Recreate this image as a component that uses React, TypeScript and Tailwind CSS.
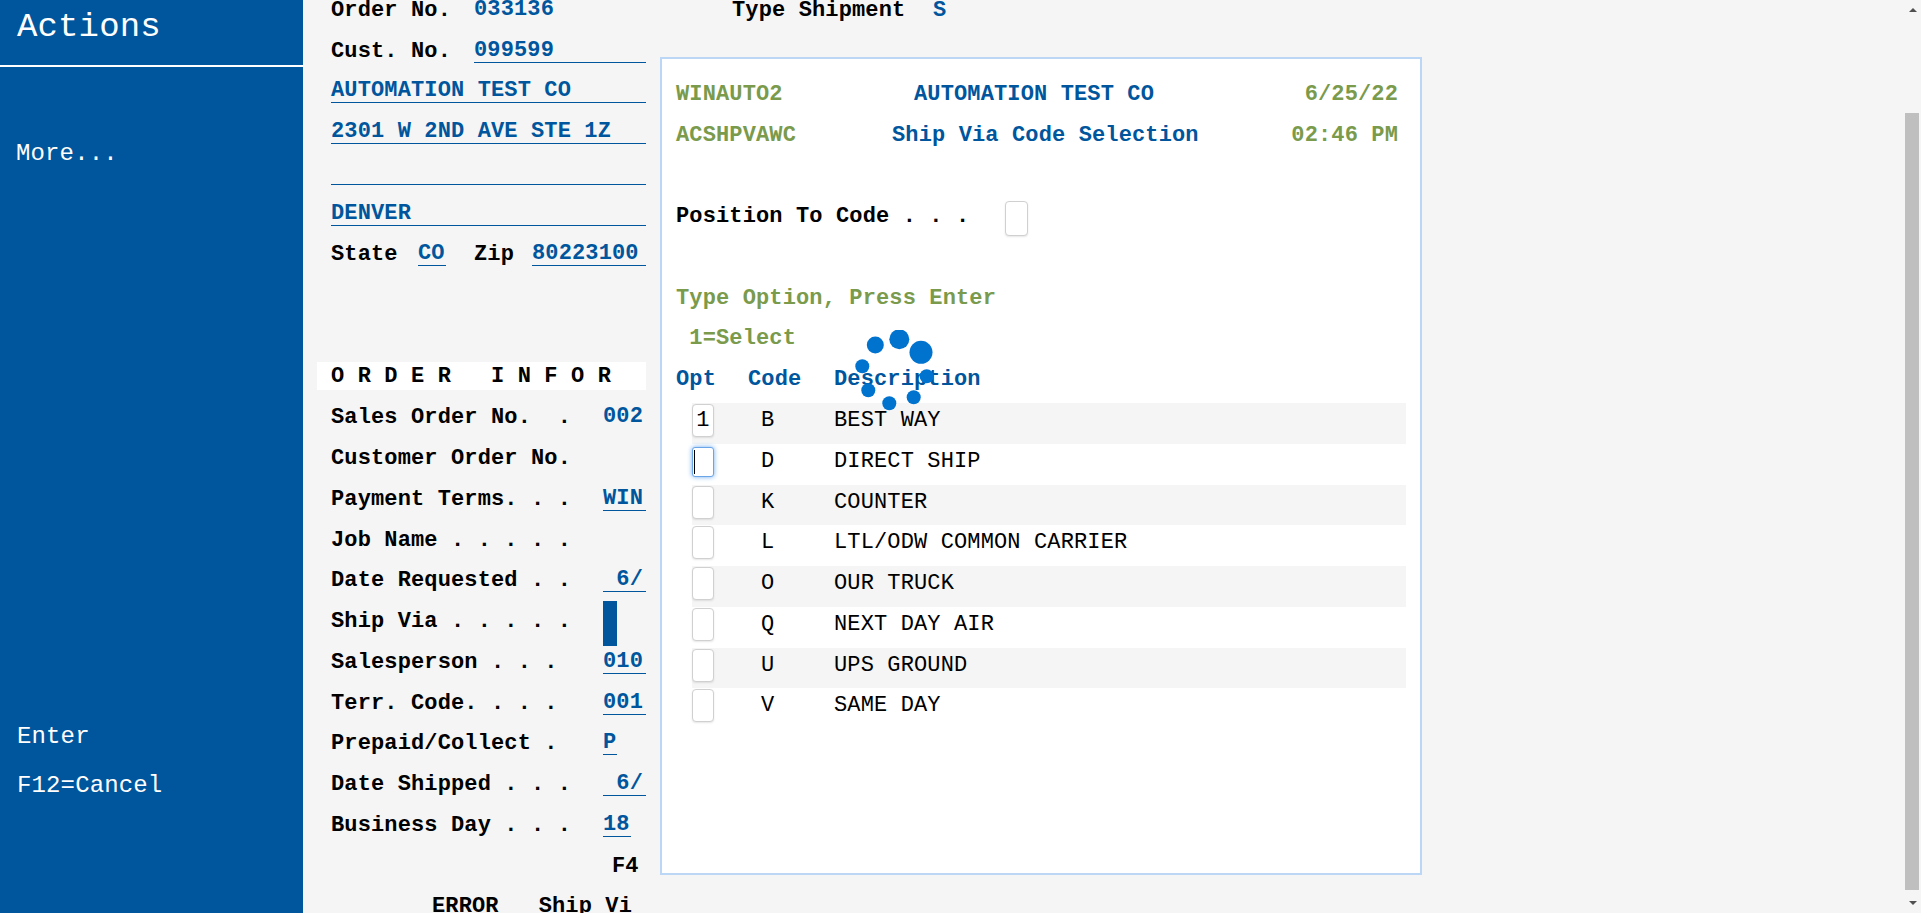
const blue = 'text-[#00569d]';
const green = 'text-[#7a9a4c]';

function Row({ children }: { children?: React.ReactNode }) {
  return <div className="flex h-[40.75px] shrink-0 items-end whitespace-pre leading-[23px]">{children}</div>;
}

function Field({ w, line = true, children }: { w: string; line?: boolean; children?: React.ReactNode }) {
  return (
    <span className={`${w} block h-[24px] ${blue} ${line ? 'border-b border-[#00569d]' : ''}`}>
      {children}
    </span>
  );
}

const infoRows: [string, string, boolean, string][] = [
  ['Sales Order No.  .', '002', false, 'w-[43px]'],
  ['Customer Order No.', '', false, 'w-[43px]'],
  ['Payment Terms. . .', 'WIN', true, 'w-[43px]'],
  ['Job Name . . . . .', '', false, 'w-[43px]'],
  ['Date Requested . .', ' 6/', true, 'w-[43px]'],
];

const infoRows2: [string, string, string][] = [
  ['Salesperson . . .', '010', 'w-[43px]'],
  ['Terr. Code. . . .', '001', 'w-[43px]'],
  ['Prepaid/Collect .', 'P', 'w-[14px]'],
  ['Date Shipped . . .', ' 6/', 'w-[43px]'],
  ['Business Day . . .', '18', 'w-[28px]'],
];

function InfoLabel({ text }: { text: string }) {
  return <span className="block w-[272px] shrink-0">{text}</span>;
}

function Box({ value, focused, className = '' }: { value?: string; focused?: boolean; className?: string }) {
  if (focused) {
    return (
      <div className="mt-[2px] flex h-[30px] w-[22px] shrink-0 items-center rounded-[3px] border border-[#6aa5e8] bg-white pl-[1px] shadow-[0_0_5px_#6fabf0]">
        <span className="block h-[24px] w-[1px] bg-black" />
      </div>
    );
  }
  return (
    <div className={`flex h-[33px] w-[22px] shrink-0 items-center justify-center rounded-[4px] border border-[#d0d0d0] bg-white font-normal text-black shadow-[0_1px_2px_#0000001a] ${className}`}>
      {value}
    </div>
  );
}

const shipVia = [
  ['B', 'BEST WAY'],
  ['D', 'DIRECT SHIP'],
  ['K', 'COUNTER'],
  ['L', 'LTL/ODW COMMON CARRIER'],
  ['O', 'OUR TRUCK'],
  ['Q', 'NEXT DAY AIR'],
  ['U', 'UPS GROUND'],
  ['V', 'SAME DAY'],
];

function Spinner() {
  return (
    <svg className="absolute left-[188px] top-[271px]" width="90" height="90" viewBox="850 330 90 90" fill="#0073cf">
      <circle cx="921" cy="352.3" r="11.5" />
      <circle cx="899.3" cy="339.3" r="10" />
      <circle cx="875.3" cy="345" r="8.5" />
      <circle cx="862.3" cy="366.3" r="7" />
      <circle cx="868.3" cy="390.3" r="7" />
      <circle cx="889.3" cy="403.3" r="7" />
      <circle cx="913.7" cy="397.3" r="7" />
      <circle cx="926.7" cy="376.3" r="7" />
    </svg>
  );
}

export default function App() {
  return (
    <div className="flex h-[913px] w-[1921px] overflow-hidden bg-[#f5f5f5] font-['Liberation_Mono',monospace] text-[22px] font-bold tracking-[0.13px] text-black">
      <aside className="flex w-[303px] shrink-0 flex-col bg-[#00569d] font-normal text-white">
        <div className="h-[67px] border-b-2 border-white pl-[17px] pt-[5px] text-[34px] leading-[44px]">Actions</div>
        <div className="pl-[16px] pt-[72px] text-[24px] leading-[30px]">More...</div>
        <div className="mt-auto pb-[112px] pl-[17px] text-[24px] leading-[30px]">
          <div>Enter</div>
          <div className="mt-[19px]">F12=Cancel</div>
        </div>
      </aside>

      <div className="ml-[28px] mt-[-19px] flex w-[315px] shrink-0 flex-col">
        <Row>
          <span className="block w-[143px] shrink-0">Order No.</span>
          <Field w="w-[172px]" line={false}>033136</Field>
        </Row>
        <Row>
          <span className="block w-[143px] shrink-0">Cust. No.</span>
          <Field w="w-[172px]">099599</Field>
        </Row>
        <Row><Field w="w-full">AUTOMATION TEST CO</Field></Row>
        <Row><Field w="w-full">2301 W 2ND AVE STE 1Z</Field></Row>
        <Row><Field w="w-full" /></Row>
        <Row><Field w="w-full">DENVER</Field></Row>
        <Row>
          <span className="block w-[87px] shrink-0">State</span>
          <Field w="w-[28px]">CO</Field>
          <span className="ml-[28px] block w-[58px] shrink-0">Zip</span>
          <Field w="w-[114px]">80223100</Field>
        </Row>
        <Row />
        <Row />
        <Row>
          <div className="-ml-[14px] mb-[-1px] h-[28px] w-[329px] shrink-0 bg-white pl-[14px] pt-[3px]">O R D E R   I N F O R</div>
        </Row>
        {infoRows.map(([label, value, line, w]) => (
          <Row key={label}>
            <InfoLabel text={label} />
            <Field w={w} line={line}>{value}</Field>
          </Row>
        ))}
        <Row>
          <InfoLabel text="Ship Via . . . . ." />
          <div className="mb-[-13px] h-[45px] w-[14px] shrink-0 bg-[#00569d]" />
        </Row>
        {infoRows2.map(([label, value, w]) => (
          <Row key={label}>
            <InfoLabel text={label} />
            <Field w={w}>{value}</Field>
          </Row>
        ))}
        <Row><span className="ml-[281px]">F4</span></Row>
        <Row><span className="ml-[101px] block w-[214px]">ERROR   Ship Vi</span></Row>
      </div>

      <div className="mt-[-19px] flex min-w-0 flex-1 flex-col">
        <Row>
          <span className="ml-[86px] block w-[201px]">Type Shipment</span>
          <span className={blue}>S</span>
        </Row>
      </div>

      <div className="flex w-[17px] shrink-0 flex-col items-center justify-between bg-[#f5f5f5] py-[8px]">
        <span className="h-0 w-0 border-x-[4px] border-b-[4px] border-x-transparent border-b-[#505050]" />
        <span className="h-0 w-0 border-x-[4px] border-t-[4px] border-x-transparent border-t-[#505050]" />
      </div>

      <div className="absolute left-[1905px] top-[113px] h-[777px] w-[14px] bg-[#bfbfbf]" />

      <section className="absolute left-[660px] top-[57px] h-[818px] w-[762px] border-2 border-[#bcd6f5] bg-white pl-[14px] pr-[22px] pt-[6px]">
        <Row>
          <span className={`${green} w-[238px]`}>WINAUTO2</span>
          <span className={blue}>AUTOMATION TEST CO</span>
          <span className={`${green} ml-auto`}>6/25/22</span>
        </Row>
        <Row>
          <span className={`${green} w-[216px]`}>ACSHPVAWC</span>
          <span className={blue}>Ship Via Code Selection</span>
          <span className={`${green} ml-auto`}>02:46 PM</span>
        </Row>
        <Row />
        <Row>
          <span className="block w-[329px]">Position To Code . . .</span>
          <Box className="mb-[-8px] h-[35px] w-[23px]" />
        </Row>
        <Row />
        <Row><span className={green}>Type Option, Press Enter</span></Row>
        <Row><span className={green}> 1=Select</span></Row>
        <Row>
          <span className={`${blue} block w-[72px]`}>Opt</span>
          <span className={`${blue} block w-[86px]`}>Code</span>
          <span className={blue}>Description</span>
        </Row>
        <div className="ml-[16px] mr-[-8px] mt-[12px] font-normal">
          {shipVia.map(([code, desc], i) => (
            <div key={code} className={`flex h-[40.75px] items-start pt-[1px] whitespace-pre leading-[28px] ${i % 2 === 0 ? 'bg-[#f5f5f5]' : 'bg-white'}`}>
              <Box value={code === 'B' ? '1' : undefined} focused={code === 'D'} />
              <span className="ml-[47px] mt-[3px] block w-[73px]">{code}</span>
              <span className="mt-[3px]">{desc}</span>
            </div>
          ))}
        </div>
        <Spinner />
      </section>
    </div>
  );
}
